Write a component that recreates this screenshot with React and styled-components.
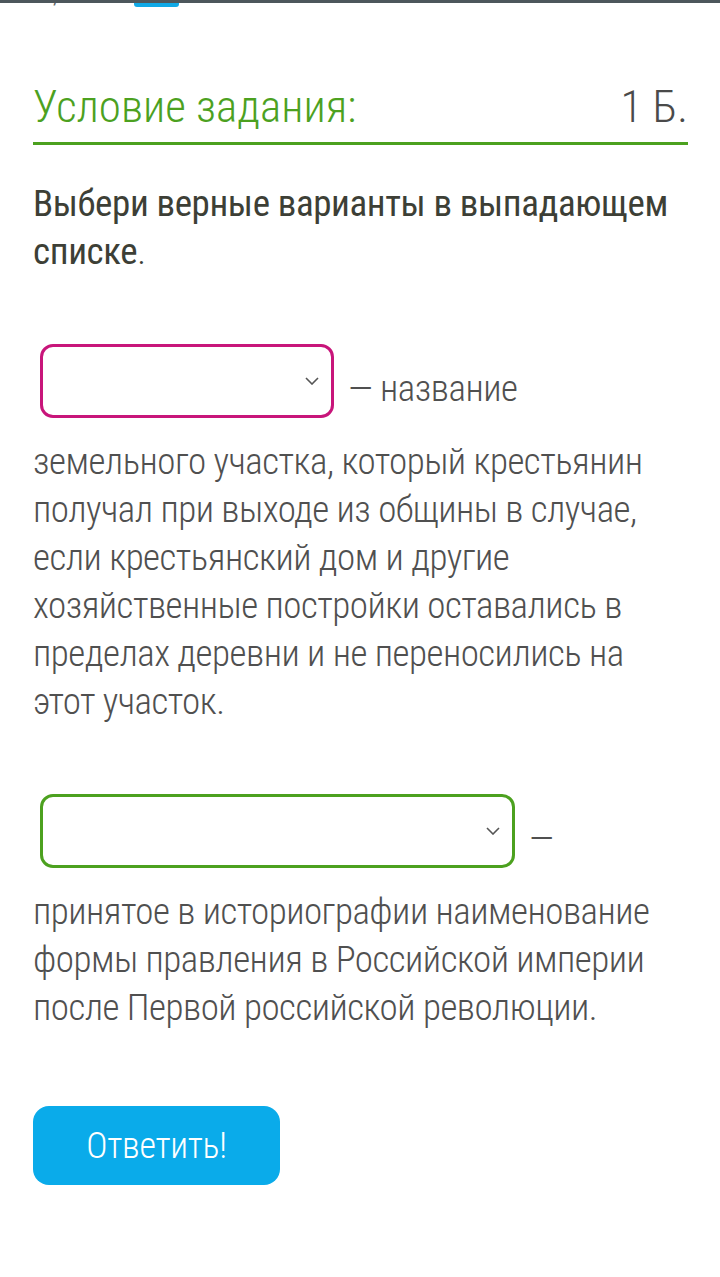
import * as React from 'react';
import styled, { createGlobalStyle } from 'styled-components';

const Global = createGlobalStyle`
  body {
    margin: 0;
    background: #fff;
    font-family: 'Roboto Condensed', Roboto, 'Liberation Sans Narrow', sans-serif;
  }
`;

const TopBar = styled.div`
  height: 3px;
  background-color: #4d575c;
`;

const Peek = styled.div`
  height: 4px;
  overflow: hidden;
  display: flex;
  align-items: flex-end;
  gap: 32px;
  padding-left: 30px;
`;

const PeekText = styled.span`
  font-size: 32px;
  line-height: 30px;
  color: #666;
  font-weight: 300;
`;

const PeekBox = styled.span`
  width: 45px;
  height: 30px;
  background-color: #10a9e6;
  border-radius: 3px;
`;

const Page = styled.main`
  padding: 73px 32px 80px 33px;
`;

const TitleRow = styled.div`
  display: flex;
  justify-content: space-between;
  align-items: baseline;
  padding-bottom: 9px;
  border-bottom: 3px solid #4ca11f;
`;

const Title = styled.h2`
  margin: 0;
  font-size: 45px;
  font-weight: 300;
  color: #4ca11f;
`;

const Points = styled.span`
  font-size: 45px;
  font-weight: 300;
  color: #4a4a4a;
`;

const Instruction = styled.p`
  margin: 35px 0 0;
  font-size: 37px;
  letter-spacing: -0.4px;
  line-height: 48px;
  color: #3d3f36;
  font-weight: 300;
  & strong { font-weight: 400; }
`;

const Question = styled.p`
  margin: ${p => p.$top || 68}px 0 0;
  font-size: 37px;
  letter-spacing: -0.5px;
  line-height: 48px;
  font-weight: 300;
  color: #505050;
`;

const Select = styled.span`
  display: inline-flex;
  align-items: center;
  justify-content: flex-end;
  box-sizing: border-box;
  width: ${p => p.$w}px;
  height: 74px;
  margin: 0 14px 20px 7px;
  padding-right: 12px;
  vertical-align: middle;
  border: 3px solid ${p => p.$color};
  border-radius: 13px;
`;

const Button = styled.button`
  margin-top: 74px;
  width: 247px;
  height: 79px;
  border: none;
  border-radius: 16px;
  background-color: #0aabea;
  color: #fff;
  font-family: inherit;
  font-size: 36px;
  letter-spacing: -0.3px;
  font-weight: 300;
`;

const Chevron = () => (
  <svg width="14" height="8" viewBox="0 0 14 8" fill="none">
    <path d="M1 1l6 6 6-6" stroke="#555" strokeWidth="1.6" />
  </svg>
);

export default function App() {
  return (
    <>
      <Global />
      <TopBar />
      <Peek>
        <PeekText>1 / 15</PeekText>
        <PeekBox />
      </Peek>
      <Page>
        <TitleRow>
          <Title>Условие задания:</Title>
          <Points>1 Б.</Points>
        </TitleRow>
        <Instruction>
          <strong>Выбери верные варианты в выпадающем списке</strong>.
        </Instruction>
        <Question $top={68}>
          <Select $w={294} $color="#c8157a"><Chevron /></Select>
          — название земельного участка, который крестьянин получал при выходе из общины в случае, если крестьянский дом и другие хозяйственные постройки оставались в пределах деревни и не переносились на этот участок.
        </Question>
        <Question $top={68}>
          <Select $w={475} $color="#4ca11f"><Chevron /></Select>
          — принятое в историографии наименование формы правления в Российской империи после Первой российской революции.
        </Question>
        <Button>Ответить!</Button>
      </Page>
    </>
  );
}
